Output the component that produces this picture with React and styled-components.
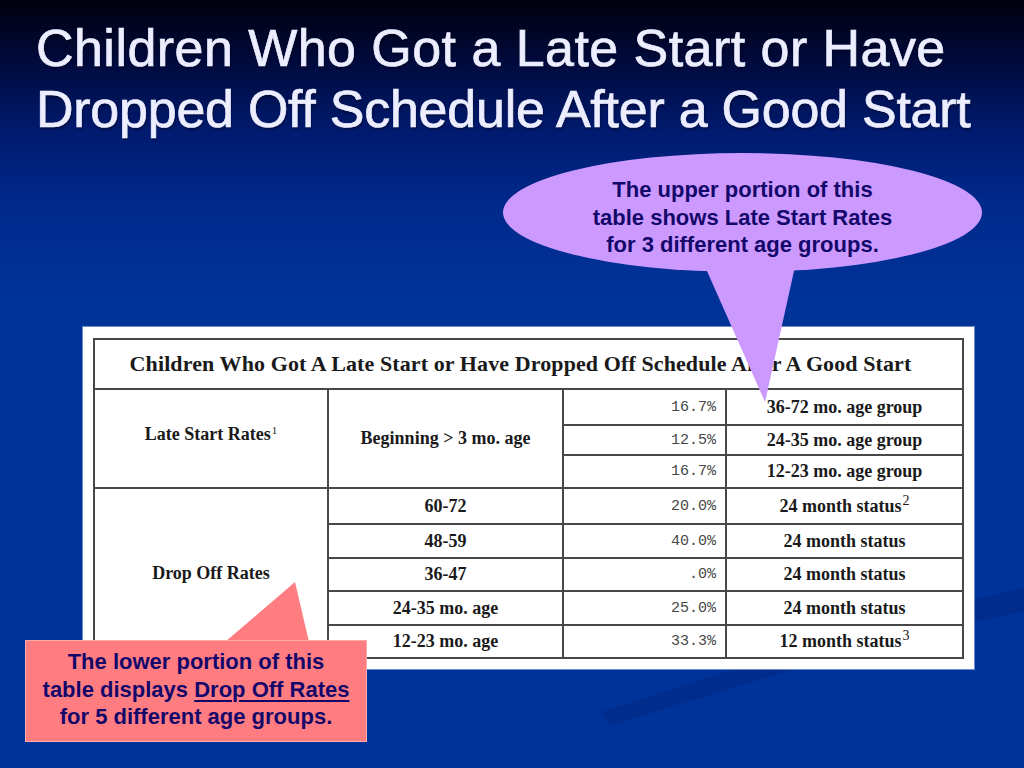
import React from "react";
import styled, { createGlobalStyle } from "styled-components";

const Global = createGlobalStyle`
  html, body { margin: 0; padding: 0; background: #003399; }
  body { font-family: "Liberation Sans", Arial, sans-serif; }
`;

const Slide = styled.div`
  position: relative;
  width: 1024px;
  height: 768px;
  overflow: hidden;
  background: linear-gradient(
    180deg,
    #00000e 0%,
    #000a3c 8%,
    #001a6e 17%,
    #00288a 26%,
    #003196 36%,
    #003399 48%,
    #003399 100%
  );
`;

const Swoosh = styled.svg`
  position: absolute;
  left: 0;
  top: 0;
  pointer-events: none;
`;

const Title = styled.h1`
  position: relative;
  margin: 0;
  padding: 18px 0 0 36px;
  font-family: "Liberation Sans", Arial, sans-serif;
  font-weight: 400;
  font-size: 52px;
  line-height: 61px;
  color: #eceeff;
  -webkit-text-stroke: 0.7px #eceeff;
  text-shadow: 1px 2px 2px rgba(0, 0, 20, 0.45);
  white-space: nowrap;
`;

const TitleLine = styled.span`
  display: block;
  letter-spacing: ${(p) => p.$spacing || "0px"};
`;

const Card = styled.div`
  position: relative;
  margin: 187px 0 0 83px;
  width: 869px;
  height: 320px;
  padding: 11px 12px 11px 10px;
  background: #ffffff;
  box-shadow: 0 0 0 1px rgba(180, 200, 240, 0.6);
`;

const Table = styled.table`
  width: 869px;
  table-layout: fixed;
  border-collapse: collapse;
  font-family: "Liberation Serif", "Times New Roman", serif;
  font-weight: 700;
  color: #1a1a1a;
`;

const Cell = styled.td`
  border: 2px solid #484848;
  padding: 0;
  text-align: ${(p) => p.$align || "center"};
  padding-right: ${(p) => (p.$align === "right" ? "9px" : "0")};
  vertical-align: middle;
  font-size: 18px;
  height: ${(p) => p.$h || "auto"};
  white-space: nowrap;
`;

const HeadCell = styled.th`
  border: 2px solid #484848;
  height: 48px;
  font-size: 22px;
  font-weight: 700;
  letter-spacing: 0.1px;
  text-align: center;
  padding: 0 16px 0 0;
  white-space: nowrap;
`;

const Pct = styled(Cell)`
  font-family: "Liberation Mono", "Courier New", monospace;
  font-weight: 400;
  font-size: 15px;
  color: #474747;
`;

const Sup = styled.sup`
  font-weight: 400;
  font-size: ${(p) => p.$size || "12px"};
  vertical-align: ${(p) => p.$va || "7px"};
  line-height: 0;
  margin-left: 1px;
`;

const Bubble = styled.div`
  position: absolute;
  left: 503px;
  top: 153px;
  width: 479px;
  height: 119px;
  border-radius: 50%;
  background: #cc99ff;
  display: flex;
  align-items: center;
  justify-content: center;
  padding-top: 10px;
  box-sizing: border-box;
`;

const CalloutText = styled.p`
  margin: 0;
  text-align: center;
  font-family: "Liberation Sans", Arial, sans-serif;
  font-weight: 700;
  font-size: 22px;
  line-height: 27.5px;
  color: #14086b;
  u { text-decoration-thickness: 2px; text-underline-offset: 3px; }
`;

const Note = styled.div`
  position: absolute;
  left: 25px;
  top: 640px;
  width: 342px;
  height: 102px;
  background: #ff7c80;
  box-shadow: inset 0 0 0 1px rgba(255, 190, 190, 0.7);
  display: flex;
  align-items: center;
  justify-content: center;
  padding-bottom: 3px;
  box-sizing: border-box;
`;

const Tail = styled.svg`
  position: absolute;
  left: 0;
  top: 0;
  pointer-events: none;
`;

const LateLabel = styled.span`
  position: relative;
  top: -4px;
`;

const lateRows = [
  { pct: "16.7%", label: "36-72 mo. age group", h: "34px" },
  { pct: "12.5%", label: "24-35 mo. age group", h: "28px" },
  { pct: "16.7%", label: "12-23 mo. age group", h: "31px" },
];

const dropRows = [
  { age: "60-72", pct: "20.0%", label: "24 month status", sup: "2", h: "34px" },
  { age: "48-59", pct: "40.0%", label: "24 month status", h: "32px" },
  { age: "36-47", pct: ".0%", label: "24 month status", h: "31px" },
  { age: "24-35 mo. age", pct: "25.0%", label: "24 month status", h: "32px" },
  { age: "12-23 mo. age", pct: "33.3%", label: "12 month status", sup: "3", h: "31px" },
];

export default function App() {
  return (
    <>
      <Global />
      <Slide>
        <Swoosh width="1024" height="768" viewBox="0 0 1024 768">
          <path d="M1024 588 C 900 615, 780 655, 600 712 L 610 726 C 790 670, 905 634, 1024 612 Z" fill="rgba(0,15,70,0.14)" />
        </Swoosh>
        <Title>
          <TitleLine $spacing="0.45px">Children Who Got a Late Start or Have</TitleLine>
          <TitleLine $spacing="-0.25px">Dropped Off Schedule After a Good Start</TitleLine>
        </Title>
        <Card>
          <Table>
            <colgroup>
              <col style={{ width: "234px" }} />
              <col style={{ width: "235px" }} />
              <col style={{ width: "163px" }} />
              <col style={{ width: "237px" }} />
            </colgroup>
            <thead>
              <tr>
                <HeadCell colSpan={4}>
                  Children Who Got A Late Start or Have Dropped Off Schedule After A Good Start
                </HeadCell>
              </tr>
            </thead>
            <tbody>
              {lateRows.map((r, i) => (
                <tr key={r.label}>
                  {i === 0 && (
                    <>
                      <Cell rowSpan={3}>
                        <LateLabel>
                          Late Start Rates<Sup $size="11px" $va="6px">1</Sup>
                        </LateLabel>
                      </Cell>
                      <Cell rowSpan={3}>Beginning &gt; 3 mo. age</Cell>
                    </>
                  )}
                  <Pct $align="right" $h={r.h}>{r.pct}</Pct>
                  <Cell>{r.label}</Cell>
                </tr>
              ))}
              {dropRows.map((r, i) => (
                <tr key={r.age}>
                  {i === 0 && <Cell rowSpan={5}>Drop Off Rates</Cell>}
                  <Cell $h={r.h}>{r.age}</Cell>
                  <Pct $align="right">{r.pct}</Pct>
                  <Cell>
                    {r.label}
                    {r.sup && <Sup $size="14px">{r.sup}</Sup>}
                  </Cell>
                </tr>
              ))}
            </tbody>
          </Table>
        </Card>

        <Tail width="1024" height="768" viewBox="0 0 1024 768">
          <polygon points="703,262 796,262 765,402" fill="#cc99ff" />
          <polygon points="225,642 309,642 295,582" fill="#ff7c80" />
        </Tail>

        <Bubble>
          <CalloutText>
            The upper portion of this
            <br />
            table shows Late Start Rates
            <br />
            for 3 different age groups.
          </CalloutText>
        </Bubble>

        <Note>
          <CalloutText>
            The lower portion of this
            <br />
            table displays <u>Drop Off Rates</u>
            <br />
            for 5 different age groups.
          </CalloutText>
        </Note>
      </Slide>
    </>
  );
}
